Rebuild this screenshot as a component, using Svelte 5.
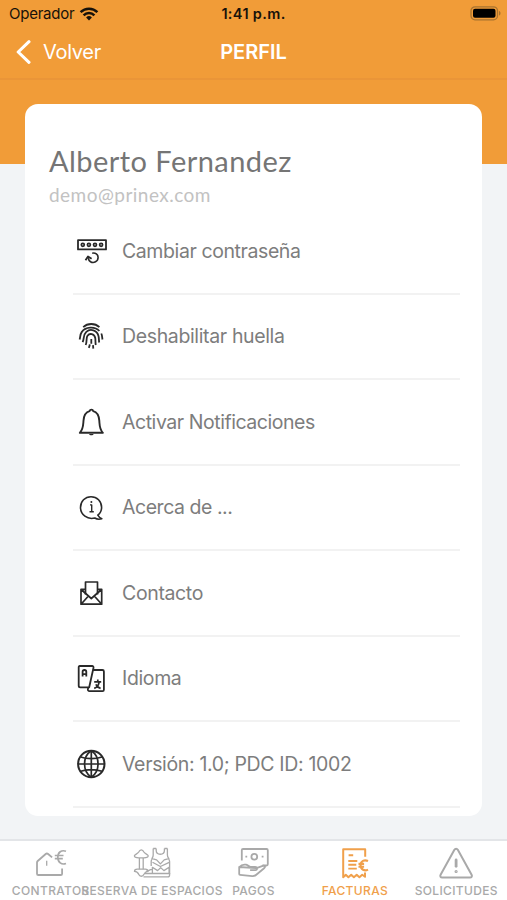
<script>
  const items = [
    { icon: "password", label: "Cambiar contraseña", spacing: -0.41 },
    { icon: "fingerprint", label: "Deshabilitar huella", spacing: -0.36 },
    { icon: "bell", label: "Activar Notificaciones", spacing: -0.45 },
    { icon: "info", label: "Acerca de ...", spacing: -0.46 },
    { icon: "mail", label: "Contacto", spacing: -0.36 },
    { icon: "language", label: "Idioma", spacing: -0.36 },
    { icon: "globe", label: "Versión: 1.0; PDC ID: 1002", spacing: -0.34 },
  ];

  const tabs = [
    { id: "contracts", label: "CONTRATOS" },
    { id: "spaces", label: "RESERVA DE ESPACIOS" },
    { id: "payments", label: "PAGOS" },
    { id: "invoices", label: "FACTURAS" },
    { id: "requests", label: "SOLICITUDES" },
  ];

  let activeTab = $state("invoices");
</script>

<div class="screen">
  <header>
    <div class="status-bar">
      <span class="carrier">
        Operador
        <svg width="20" height="14" viewBox="0 0 20 14">
          <g fill="none" stroke="#17120a" stroke-width="2.5">
            <path d="M1.6 5.2a12 12 0 0 1 16.8 0" />
            <path d="M4.6 8.3a7.7 7.7 0 0 1 10.8 0" />
          </g>
          <path d="M7.1 10.4a4.2 4.2 0 0 1 5.8 0L10 13.4z" fill="#17120a" />
        </svg>
      </span>
      <span class="clock">1:41 p.m.</span>
      <svg class="battery" width="31" height="15" viewBox="0 0 31 15">
        <rect x="1" y=".8" width="26.5" height="13" rx="4" fill="none" stroke="#a8732f" stroke-width="1.3" />
        <rect x="3" y="2.8" width="22.5" height="9" rx="2" fill="#000" />
        <path d="M29 5c2 .7 2 3.9 0 4.6z" fill="#a8732f" />
      </svg>
    </div>
    <div class="nav-bar">
      <button class="back">
        <svg width="15" height="24" viewBox="0 0 15 24">
          <path d="M13 1.7 2.2 12 13 22.3" fill="none" stroke="#fff" stroke-width="3.1" stroke-linecap="round" stroke-linejoin="round" />
        </svg>
        Volver
      </button>
      <h1>PERFIL</h1>
    </div>
  </header>

  <main>
    <div class="card">
      <h2>Alberto Fernandez</h2>
      <p class="email">demo@prinex.com</p>
      <ul>
        {#each items as item}
          <li>
            <svg class="item-icon" width="32" height="32" viewBox="0 0 32 32">
              {#if item.icon === "password"}
                <rect x="3" y="5.2" width="28" height="9.2" stroke-width="1.8" />
                {#each [7.8, 13.9, 20, 26.1] as x}
                  <circle cx={x} cy="9.8" r="1.5" stroke-width="1.7" />
                {/each}
                <path d="M17.2 18.2c3.2-.7 5.9 1.2 5.9 4.3 0 3.8-4.4 6.2-7.6 4.2-1.3-.8-2-2-2.2-3.6" stroke-width="1.6" />
                <path d="M10.5 25.2l2.5-3.8 3.6 2.4" stroke-width="1.8" />
              {:else if item.icon === "fingerprint"}
                <g stroke-width="1.8">
                  <path d="M8.2 7.2C12.6 2.9 20 2.9 24.4 7.2M4.6 19.5c.8-2.5.4-5.1 2.1-7.4C10.6 6.7 19.8 6.2 24.4 11M26.3 13.5c1 2.2.8 4.2 1.2 6" />
                  <path d="M7.6 22.2c1.9-4.1.4-7.4 3.7-10.4 4.2-3.7 10.7-1.5 12.2 4.1.6 2.4.3 4.7.7 6.6" />
                  <path d="M10.7 25c1.6-4.3.2-6.9 1.8-9.2 2.2-3.1 6.8-2 7.7 2 .5 2.4 0 4.9.6 7.2M16.3 19v4.7M13.8 27.8c.6-1.3.9-2.4 1-3.5M18 25.2l.3 3.4" />
                </g>
              {:else if item.icon === "bell"}
                <path d="M4.8 26.8h23.1c-3.6-3.6-3.2-7.2-3.6-12.2-.3-4.7-2.4-8.5-6.1-9.5-.4-2-3.1-2-3.6 0-3.8 1-5.8 4.8-6.1 9.5-.4 5-.1 8.6-3.7 12.2z" stroke-width="1.9" />
                <path d="M14 28c.5 1.8 4.2 1.8 4.7 0z" fill="#292929" stroke="none" />
              {:else if item.icon === "info"}
                <path d="M26.8 27.8c-2.3.6-5 .5-7-.8C12.5 29 5.5 23.7 5.5 16.4 5.5 10.4 10 5.7 16 5.7s10.6 4.6 10.6 10.6c0 3.4-1.4 6-3.8 7.8 1 1.7 2 2.9 4 3.7z" stroke-width="1.6" />
                <path d="M15 13.9h1.7v6.8M14.5 20.7h4.3" stroke-width="1.4" />
                <circle cx="16.4" cy="11" r="1" fill="#292929" stroke="none" />
              {:else if item.icon === "mail"}
                <g stroke-width="1.7">
                  <path d="M10.5 17.6V5h12v12.6" />
                  <path d="M10.3 12.3H6v14.9h20.7V12.3h-3.8M6.2 12.5l10.1 9 10.2-9M6.3 27l7.1-8M26.5 27l-7.2-8" />
                </g>
              {:else if item.icon === "language"}
                <g stroke-width="1.8">
                  <path d="M4.7 4h12.4c1 0 1.6.8 1.4 1.7l-4.3 19.6H5.3c-1 0-1.6-.7-1.6-1.6V5.2c0-.7.4-1.2 1-1.2z" />
                  <path d="M18 8h9.4c.9 0 1.5.7 1.5 1.5v18.2c0 .8-.6 1.4-1.4 1.4H14.5c-1.2 0-1.9-.9-1.6-2l.5-1.8" />
                  <path d="M7.6 14.6v-4.8c0-2.4 3.7-2.4 3.7 0v4.8M7.6 12.2h3.7" />
                  <path d="M19.2 19.8h7M22.8 17.6v2M19.2 26.4c3.1-1.1 4.6-2.8 4.9-6.5M20.8 22.4c1 2 2.6 3.4 4.8 4" stroke-width="1.7" />
                </g>
              {:else}
                <g stroke-width="1.7">
                  <circle cx="16.3" cy="16" r="13.2" stroke-width="2" />
                  <path d="M3 16h26.6M16.3 2.8v26.4M5.7 9c6 2.2 15.2 2.2 21.2 0M5.7 23.2c6-2.2 15.2-2.2 21.2 0" />
                  <path d="M16.3 2.8c-9 5.8-9 20.6 0 26.4M16.3 2.8c9 5.8 9 20.6 0 26.4" />
                </g>
              {/if}
            </svg>
            <span style:letter-spacing="{item.spacing}px">{item.label}</span>
          </li>
        {/each}
      </ul>
    </div>
  </main>

  <nav>
    {#each tabs as tab}
      <button class="tab" class:active={activeTab === tab.id} onclick={() => (activeTab = tab.id)}>
        <svg width="40" height="36" viewBox="0 0 40 36">
          {#if tab.id === "contracts"}
            <path d="M31.1 25.6v5.1a1.3 1.3 0 0 1-1.3 1.3H7.3A1.3 1.3 0 0 1 6 30.7V19.4c0-.6.3-1 .7-1.4l8-7c.8-.7 1.6-.7 2.4 0l4 3.4" />
            <path d="M15.7 17.8v5" stroke-width="1.3" />
            <path d="M35 8.2c-4.5-1.5-8.2 1-8.2 6s3.8 8 8.2 6.3M23.8 12.5h8.7M23.8 15.7h8" stroke-width="1.7" />
          {:else if tab.id === "spaces"}
            <g stroke-width="1.3">
              <path d="M2.4 12.7c0-1 3.6-2.1 4.3-3.6.5-1.2 1.3-2.3 2.6-2.3s2.1 1.1 2.6 2.3c.7 1.5 4.3 2.6 4.3 3.6 0 1.6-2 2.1-4.4 2.1H6.8c-2.4 0-4.4-.5-4.4-2.1zM7.4 15v11.2M11.2 15v11.2" />
              <path d="M5.2 26.2h8.2c1.4 0 2.5 1 2.5 2.2-2 .2-3.2 1.2-4.1 3.1-.9 2.3-4.1 2.3-5 0-.8-2-2.1-2.9-4.3-3.1 0-1.2 1.2-2.2 2.7-2.2z" />
              <path d="M21.2 5.5V12c0 2.7-2 3.8-2 6.6v4.5M24.2 5.5v2c0 5 8.2 5 8.2 0v-2M21.2 5.5h3M32.4 5.5h3M35.4 5.5V12c0 2.7 2.2 3.8 2.2 6.6V31M19.4 15.3l5.2 1.6 3.8 4 3.8-4 5.2-1.6M20.5 19.3l7.9 4.2 8.8-4.2" />
              <path d="M20.4 30.5v-6.2l5.2 3.3 3.1-3 3.2 3 5.2-3.3v6.2M14 28.3c2.8.1 3.2-1.9 6.2-1.9M11.5 33.9h24.2c1.1 0 1.9-.8 1.9-1.9v-1.5H13" />
            </g>
          {:else if tab.id === "payments"}
            <g stroke-width="1.8">
              <path d="M8.8 17.5V7.2c0-.7.4-1.2 1.2-1.2h23.6c.8 0 1.2.5 1.2 1.2v14.1c0 .8-.5 1.2-1.2 1.2h-4.2" />
              <circle cx="21.3" cy="13.7" r="2.9" />
              <path d="M12.4 13.7h1.8M28.7 13.7h1.8" />
              <path d="M6.4 24c1.9-2.3 4-2.8 6.7-2.3 2.3.5 3.4 2.3 5.4 2.3h3.7c2.3 0 2.5 3.1.2 3.2h-5.3M23.5 25.2l6.2-2.4c2.1-.7 3.2 1 1.4 2.4l-7.8 6.6c-1.2 1-2.5 1.4-4 1.3L7 31.8c-.5 0-.8-.4-.8-.9V24z" />
            </g>
          {:else if tab.id === "invoices"}
            <path d="M30.2 13.8V6.2H8.2v28l2.6-2.4 2.6 2.4 2.8-2.4 2.7 2.4 2.8-2.4 2.7 2.4 2.8-2.4 2.8 2v-4.4" stroke-width="2" />
            <path d="M13.6 12.2h4.6M13.3 18h9M13.3 21.8h8M13.3 25.6h8.5" stroke-width="1.9" />
            <path d="M33 18c-3.6-1.6-7.4 0-7.4 4.3s4 6.1 7.4 4.3M23.5 20.9h5.6M23.5 23.7h5.6" stroke-width="2.1" />
          {:else}
            <path d="M18.4 6.8c.8-1.4 2.6-1.4 3.4 0l13.8 25c.8 1.4 0 2.8-1.6 2.8H6.2c-1.6 0-2.4-1.4-1.6-2.8z" stroke-width="2" />
            <path d="M20.1 17v6.3" stroke-width="2.8" stroke-linecap="round" />
            <circle cx="20.1" cy="28.5" r="1" stroke-width="1.2" />
          {/if}
        </svg>
        <span>{tab.label}</span>
      </button>
    {/each}
  </nav>
</div>

<style>
  :global(body) {
    margin: 0;
    overflow: hidden;
  }

  .screen {
    display: flex;
    flex-direction: column;
    height: 900px;
    background: linear-gradient(#f19c38 164.5px, #f2f4f6 164.5px);
    font-family: Inter, "Liberation Sans", sans-serif;
  }

  button {
    border: none;
    padding: 0;
    background: none;
    font-family: inherit;
    cursor: pointer;
  }

  header {
    height: 80px;
    border-bottom: 2px solid #ea9538;
    box-sizing: border-box;
    flex: none;
  }

  .status-bar {
    display: grid;
    grid-template-columns: 1fr auto 1fr;
    align-items: center;
    height: 27px;
    padding: 0 6px 0 9px;
    color: #17120a;
    font-size: 15px;
  }

  .carrier {
    display: flex;
    align-items: center;
    gap: 5px;
    letter-spacing: -0.25px;
  }

  .clock {
    margin-right: 3px;
    font-size: 14.5px;
    font-weight: 600;
    letter-spacing: 0.35px;
  }

  .battery {
    justify-self: end;
  }

  .nav-bar {
    display: grid;
    grid-template-columns: 1fr auto 1fr;
    align-items: center;
    height: 50px;
    padding: 0 16px;
    color: #fff;
  }

  .back {
    display: flex;
    align-items: center;
    gap: 12px;
    color: #fff;
    font-size: 20px;
    letter-spacing: -0.3px;
  }

  h1 {
    margin: 0;
    font-size: 20px;
    font-weight: 600;
    letter-spacing: 0;
  }

  main {
    flex: 1;
    padding: 24px 25px 0;
  }

  .card {
    height: 712px;
    box-sizing: border-box;
    padding: 39px 22px 0 24px;
    border-radius: 13px;
    background: #fff;
    overflow: hidden;
  }

  h2 {
    margin: 0;
    color: #757575;
    font-family: Lato, sans-serif;
    font-size: 29px;
    font-weight: 400;
    line-height: 36px;
    letter-spacing: 0.45px;
  }

  .email {
    margin: 0;
    color: #c2c2c2;
    font-family: Lato, sans-serif;
    font-size: 19px;
    line-height: 32px;
    letter-spacing: 0.47px;
  }

  ul {
    margin: -2px 0 0 24px;
    padding: 0;
    list-style: none;
  }

  li {
    display: flex;
    align-items: center;
    gap: 15px;
    height: 85.5px;
    box-sizing: border-box;
    padding-left: 2px;
    border-bottom: 2px solid #f2f2f2;
    color: #7d7d7d;
    font-size: 19.5px;
  }

  .item-icon {
    flex: none;
    fill: none;
    stroke: #292929;
    stroke-linejoin: round;
  }

  nav {
    display: grid;
    grid-template-columns: repeat(5, minmax(0, 1fr));
    flex: none;
    height: 61px;
    box-sizing: border-box;
    border-top: 2px solid #e3e5e8;
    background: #fff;
  }

  .tab {
    display: flex;
    flex-direction: column;
    align-items: center;
    color: #a9a9a9;
    font-size: 12px;
    font-weight: 500;
    letter-spacing: 0.35px;
    white-space: nowrap;
  }

  .tab svg {
    flex: none;
    margin-top: 2px;
    fill: none;
    stroke: currentColor;
    stroke-width: 1.8;
    stroke-linejoin: round;
  }

  .tab span {
    margin-top: 4px;
    line-height: 15px;
  }

  .tab.active {
    color: #f0a04b;
  }
</style>
